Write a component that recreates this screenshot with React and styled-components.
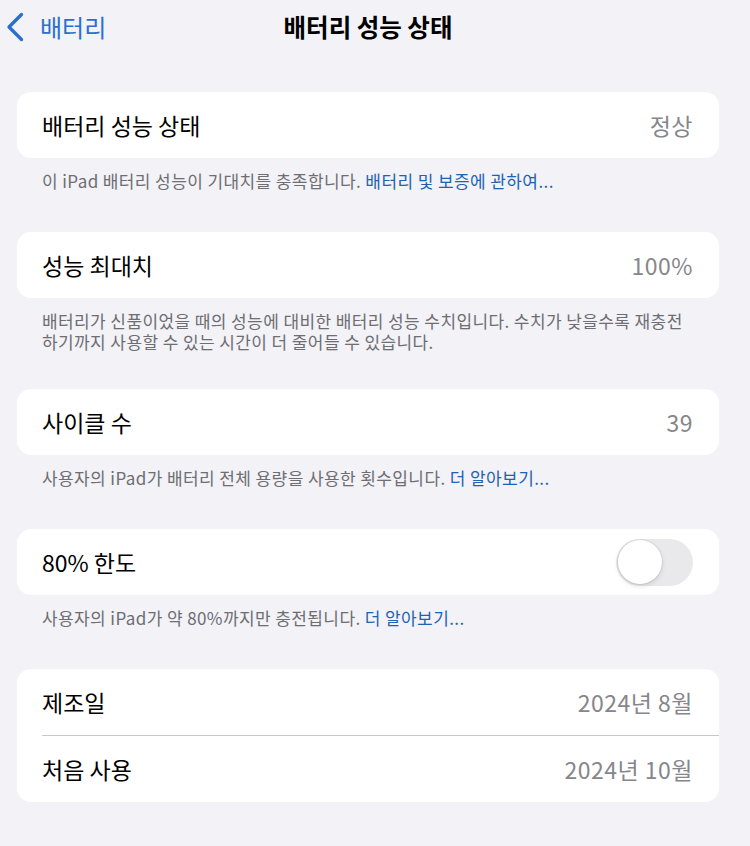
import React from "react";
import styled, { createGlobalStyle } from "styled-components";

const GlobalStyle = createGlobalStyle`
  html, body {
    margin: 0;
    padding: 0;
    background: #f2f2f7;
  }
  body {
    font-family: "Noto Sans CJK KR", "Noto Sans", "Liberation Sans", sans-serif;
    -webkit-font-smoothing: antialiased;
  }
`;

function App() {
  return (
    <>
      <GlobalStyle />
      <Page>
        <NavBar>
          <BackButton>
            <svg width="18" height="30" viewBox="0 0 18 30">
              <path
                d="M15.5 2.5 L3 15 L15.5 27.5"
                fill="none"
                stroke="#2a6fce"
                strokeWidth="3.3"
                strokeLinecap="round"
                strokeLinejoin="round"
              />
            </svg>
            <span>배터리</span>
          </BackButton>
          <Title>배터리 성능 상태</Title>
          <div />
        </NavBar>

        <Section>
          <Card>
            <Row>
              <Label>배터리 성능 상태</Label>
              <Value>정상</Value>
            </Row>
          </Card>
          <Footer>
            이 iPad 배터리 성능이 기대치를 충족합니다.{" "}
            <Link>배터리 및 보증에 관하여...</Link>
          </Footer>
        </Section>

        <Section $tight>
          <Card>
            <Row>
              <Label>성능 최대치</Label>
              <Value>100%</Value>
            </Row>
          </Card>
          <Footer>
            배터리가 신품이었을 때의 성능에 대비한 배터리 성능 수치입니다. 수치가 낮을수록 재충전
            <br />
            하기까지 사용할 수 있는 시간이 더 줄어들 수 있습니다.
          </Footer>
        </Section>

        <Section>
          <Card>
            <Row>
              <Label>사이클 수</Label>
              <Value>39</Value>
            </Row>
          </Card>
          <Footer>
            사용자의 iPad가 배터리 전체 용량을 사용한 횟수입니다. <Link>더 알아보기...</Link>
          </Footer>
        </Section>

        <Section>
          <Card>
            <Row>
              <Label>80% 한도</Label>
              <Toggle>
                <Knob />
              </Toggle>
            </Row>
          </Card>
          <Footer>
            사용자의 iPad가 약 80%까지만 충전됩니다. <Link>더 알아보기...</Link>
          </Footer>
        </Section>

        <Section>
          <Card>
            <Row>
              <Label>제조일</Label>
              <Value>2024년 8월</Value>
            </Row>
            <Divider />
            <Row>
              <Label>처음 사용</Label>
              <Value>2024년 10월</Value>
            </Row>
          </Card>
        </Section>
      </Page>
    </>
  );
}

export default App;

const Page = styled.div`
  width: 750px;
  min-height: 846px;
  box-sizing: border-box;
  padding: 0 31px 0 17px;
  background: #f2f2f7;
`;

const NavBar = styled.div`
  height: 53px;
  display: grid;
  grid-template-columns: 1fr auto 1fr;
  align-items: center;
  margin-bottom: 39px;
`;

const BackButton = styled.div`
  display: flex;
  align-items: center;
  gap: 16px;
  margin-left: -11px;
  color: #2a6fce;
  font-size: 24px;

  svg {
    display: block;
  }
`;

const Title = styled.div`
  font-size: 24.5px;
  font-weight: 700;
  color: #000;
`;

const Section = styled.div`
  margin-bottom: ${(p) => (p.$tight ? "37px" : "41px")};
`;

const Card = styled.div`
  background: #fff;
  border-radius: 14px;
  overflow: hidden;
`;

const Row = styled.div`
  height: 66px;
  display: flex;
  align-items: center;
  justify-content: space-between;
  padding: 0 26px 0 25px;
`;

const Label = styled.div`
  font-size: 23px;
  color: #000;
`;

const Value = styled.div`
  font-size: 23px;
  color: #86868b;
  letter-spacing: 0.5px;
`;

const Divider = styled.div`
  height: 1px;
  background: #c8c8cc;
  margin-left: 25px;
`;

const Footer = styled.div`
  padding: 12px 25px 0;
  font-size: 17px;
  line-height: 21px;
  color: #6d6d72;
  letter-spacing: 0.4px;
  white-space: nowrap;
`;

const Link = styled.span`
  color: #1f62b0;
`;

const Toggle = styled.div`
  width: 77px;
  height: 47px;
  border-radius: 24px;
  background: #e9e9eb;
  padding: 1.5px;
  box-sizing: border-box;
  display: flex;
  align-items: center;
`;

const Knob = styled.div`
  width: 44px;
  height: 44px;
  border-radius: 50%;
  background: #fff;
  box-shadow: 0 2px 5px rgba(0, 0, 0, 0.12), 0 0 0 1px rgba(0, 0, 0, 0.06);
`;
